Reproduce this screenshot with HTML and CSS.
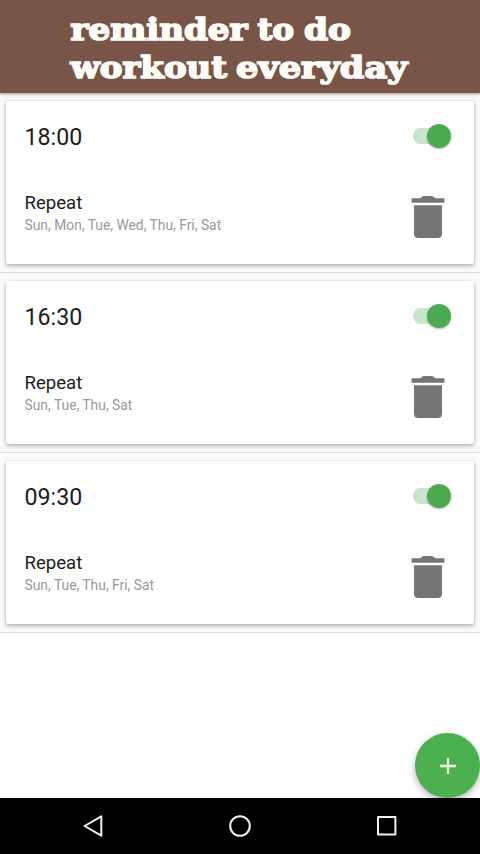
FILE: index.html
```
<!DOCTYPE html>
<html lang="en">
<head>
<meta charset="utf-8">
<title>Workout reminders</title>
<link rel="stylesheet" href="styles.css">
</head>
<body>
<svg class="defs" width="0" height="0" aria-hidden="true">
  <symbol id="trash" viewBox="0 0 34 44">
    <path d="M1.1 3.2H9.5Q11.2 1 13 1H20.5Q22.3 1 24 3.2H32.9Q33.5 3.2 33.5 4V7.8H0.5V4Q0.5 3.2 1.1 3.2ZM3 10.2H31V38.5Q31 43 26.5 43H7.5Q3 43 3 38.5Z"/>
  </symbol>
</svg>
<div class="screen">
  <header class="header">
    <svg class="title" width="345" height="93" viewBox="0 0 345 93">
      <text x="0.5" y="40" textLength="177" lengthAdjust="spacingAndGlyphs">reminder</text>
      <text x="187.5" y="40" textLength="36.5" lengthAdjust="spacingAndGlyphs">to</text>
      <text x="234" y="40" textLength="47" lengthAdjust="spacingAndGlyphs">do</text>
      <text x="0.5" y="77.7" textLength="156.5" lengthAdjust="spacingAndGlyphs">workout</text>
      <text x="166" y="77.7" textLength="171.5" lengthAdjust="spacingAndGlyphs">everyday</text>
    </svg>
  </header>
  <main class="list">
    <section class="item">
      <div class="card">
        <div class="row"><span class="time">18:00</span><span class="switch"><span class="thumb"></span></span></div>
        <div class="row details">
          <div><div class="repeat">Repeat</div><div class="days">Sun, Mon, Tue, Wed, Thu, Fri, Sat</div></div>
          <svg class="trash"><use href="#trash"/></svg>
        </div>
      </div>
    </section>
    <section class="item">
      <div class="card">
        <div class="row"><span class="time">16:30</span><span class="switch"><span class="thumb"></span></span></div>
        <div class="row details">
          <div><div class="repeat">Repeat</div><div class="days">Sun, Tue, Thu, Sat</div></div>
          <svg class="trash"><use href="#trash"/></svg>
        </div>
      </div>
    </section>
    <section class="item">
      <div class="card">
        <div class="row"><span class="time">09:30</span><span class="switch"><span class="thumb"></span></span></div>
        <div class="row details">
          <div><div class="repeat">Repeat</div><div class="days">Sun, Tue, Thu, Fri, Sat</div></div>
          <svg class="trash"><use href="#trash"/></svg>
        </div>
      </div>
    </section>
    <div class="fab">
      <svg width="18" height="18" viewBox="0 0 18 18"><path d="M9 1V17M1 9H17"/></svg>
    </div>
  </main>
  <nav class="navbar">
    <svg viewBox="0 0 24 24"><path d="M20.3 2.3V21.7L3.6 12Z"/></svg>
    <svg viewBox="0 0 24 24"><circle cx="12" cy="12" r="9.8"/></svg>
    <svg viewBox="0 0 24 24"><rect x="3" y="3" width="17.4" height="17.4"/></svg>
  </nav>
</div>
</body>
</html>
```
FILE: styles.css
```
* { box-sizing: border-box; }
body { margin: 0; font-family: Roboto, sans-serif; background: #fff; }
.defs { position: absolute; }
.screen { width: 480px; height: 854px; display: flex; flex-direction: column; overflow: hidden; }
.header {
  height: 93px;
  padding-left: 70px;
  background: #795548;
  box-shadow: 0 1px 3px rgba(90, 50, 35, .5);
  position: relative;
  z-index: 1;
}
.title { display: block; overflow: visible; }
.title text {
  font: bold 29.5px "DejaVu Serif", serif;
  fill: #fffdf8;
  stroke: #fffdf8;
  stroke-width: 1.6px;
}
.list { flex: 1; position: relative; overflow: hidden; }
.item {
  height: 180px;
  padding: 8px 6px;
  background: #fafafa;
  border-bottom: 1px solid #dcdcdc;
}
.card {
  height: 163px;
  padding: 22px 22px 0 18.5px;
  background: #fff;
  border-radius: 2px;
  box-shadow: 0 2px 4px rgba(0, 0, 0, .28), 0 0 2px rgba(0, 0, 0, .12);
}
.row { display: flex; justify-content: space-between; }
.time { font-size: 23.2px; line-height: 28px; color: #1c1c1c; }
.switch {
  width: 36px;
  height: 16px;
  margin-top: 5px;
  border-radius: 8px;
  background: #c8e6c9;
  display: flex;
  align-items: center;
  justify-content: flex-end;
  margin-right: 2.7px;
}
.thumb {
  width: 24px;
  height: 24px;
  margin-right: -1.7px;
  border-radius: 50%;
  background: #4caa50;
  box-shadow: 0 1px 2px rgba(0, 0, 0, .3);
}
.details { margin-top: 44px; }
.repeat { font-size: 18.6px; line-height: 22px; margin-top: -3px; color: #1c1c1c; }
.days { font-size: 13.85px; line-height: 18px; margin-top: 2px; color: #999; }
.trash { width: 34px; height: 44px; margin-right: 7.3px; fill: #757575; }
.fab {
  position: absolute;
  right: 0;
  bottom: 0;
  width: 65px;
  height: 65px;
  border-radius: 50%;
  background: #4caf50;
  box-shadow: 0 3px 7px rgba(0, 0, 0, .3);
  display: flex;
  align-items: center;
  justify-content: center;
}
.fab path { stroke: #e8fbe6; stroke-width: 2.3px; }
.navbar {
  height: 56px;
  padding: 0 81px;
  background: #000;
  display: flex;
  align-items: center;
  justify-content: space-between;
}
.navbar svg { width: 24px; height: 24px; fill: none; stroke: #f2f2f2; stroke-width: 2px; stroke-linejoin: round; }
```
